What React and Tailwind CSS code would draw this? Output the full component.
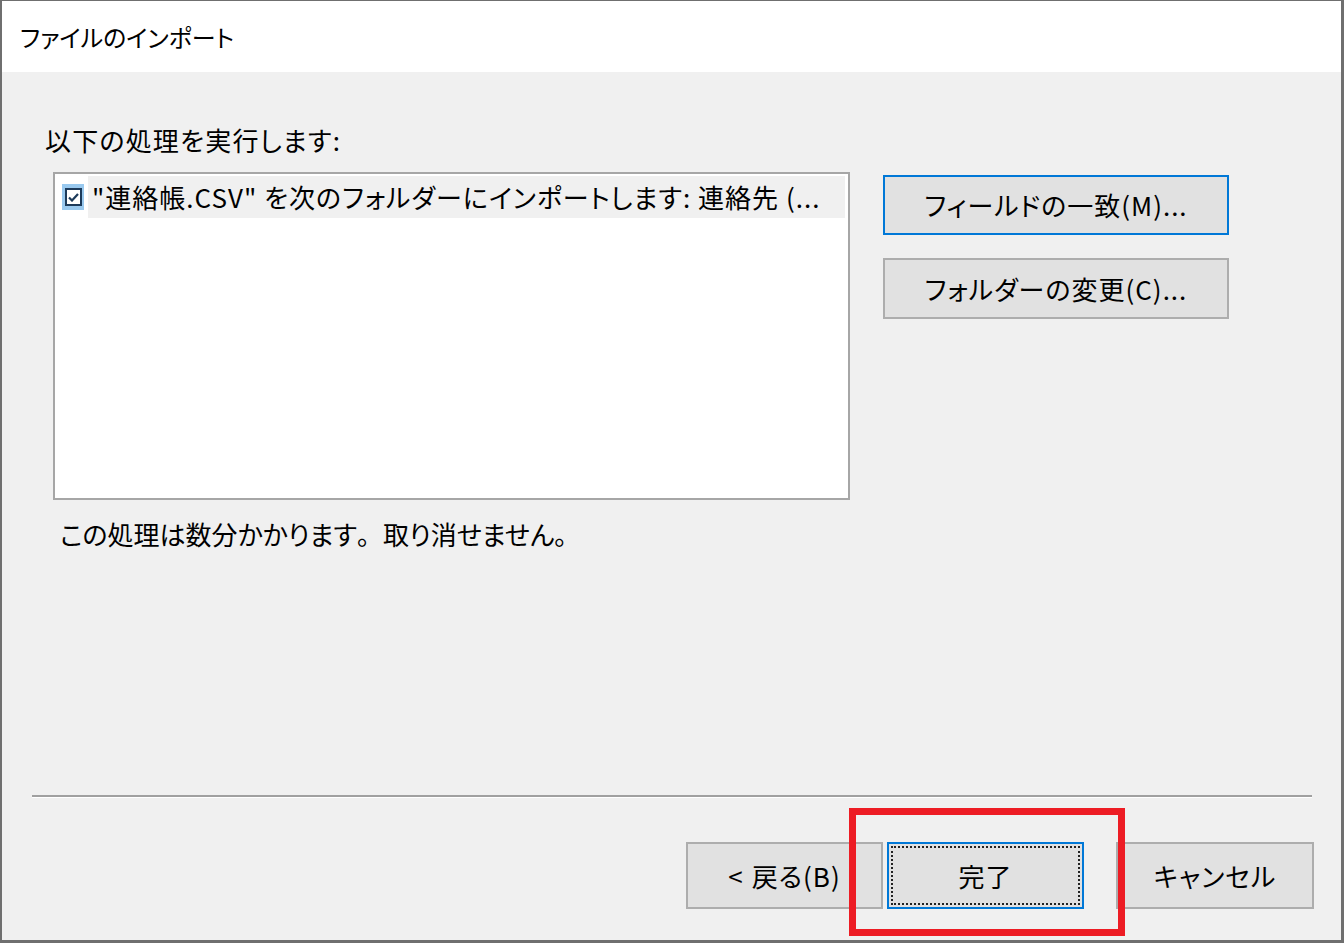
import React from 'react';

const jp = "font-['Noto_Sans_CJK_JP',sans-serif] [font-feature-settings:'palt'] text-black";

const WinButton = ({ children, focused = false, dotted = false, className = '' }) => (
  <div
    className={`relative flex items-center justify-center bg-[#e1e1e1] ${
      focused ? 'border-2 border-[#0078d7]' : 'border-2 border-[#adadad]'
    } ${className}`}
  >
    {dotted && <div className="absolute inset-[2px] border-2 border-dotted border-[#222]" />}
    <span className="text-[26px] leading-none tracking-[1px]">{children}</span>
  </div>
);

const CheckBox = () => (
  <div className="flex h-[26px] w-[22px] items-center justify-center bg-[#99c9ef]">
    <div className="flex h-[18px] w-[17px] items-center justify-center border-2 border-[#1c3a5a] bg-white">
      <svg width="11" height="9" viewBox="0 0 11 9" fill="none">
        <path d="M1 4.5 L4 7.5 L10 1" stroke="#1c3a5a" strokeWidth="2.2" />
      </svg>
    </div>
  </div>
);

// full-width punctuation keeps its normal width
const Kuten = () => <span className="[font-feature-settings:normal]">。</span>;

export default function App() {
  return (
    <div className={`relative flex h-[943px] w-[1344px] flex-col border-t border-l-2 border-r-[3px] border-b-[3px] border-[#6f6f6f] bg-[#f0f0f0] ${jp}`}>
      {/* title */}
      <div className="flex h-[71px] items-center bg-white pl-[18px]">
        <span className="text-[24px] leading-none">ファイルのインポート</span>
      </div>

      {/* body */}
      <div className="ml-[43px] mt-[52px] text-[26px] leading-[32px] tracking-[1.2px]">以下の処理を実行します:</div>

      <div className="mt-[16px] flex">
        <div className="ml-[51px] h-[328px] w-[797px] border-2 border-[#a6a6a6] bg-white">
          <div className="ml-[7px] mt-[2px] flex h-[42px] items-center">
            <CheckBox />
            <div className="ml-[4px] flex h-full w-[757px] items-center bg-[#f0f0f0] pl-[4px]">
              <span className="whitespace-nowrap text-[26px] leading-none tracking-[1px]">"連絡帳.CSV" を次のフォルダーにインポートします: 連絡先 (...</span>
            </div>
          </div>
        </div>

        <div className="ml-[33px] flex flex-col">
          <WinButton focused className="mt-[3px] h-[60px] w-[346px]">フィールドの一致(M)...</WinButton>
          <WinButton className="mt-[23px] h-[61px] w-[346px]">フォルダーの変更(C)...</WinButton>
        </div>
      </div>

      <div className="ml-[58px] mt-[18px] text-[26px] leading-[32px]">
        この処理は数分かかります<Kuten />取り消せません<Kuten />
      </div>

      <div className="flex-1" />

      {/* separator */}
      <div className="ml-[30px] w-[1280px] border-t-2 border-b border-t-[#a0a0a0] border-b-white" />

      {/* footer buttons */}
      <div className="mt-[44px] mb-[31px] flex justify-end pr-[27px]">
        <WinButton className="h-[67px] w-[197px]">
          <span className="mr-[8px]">&lt;</span>戻る(B)
        </WinButton>
        <WinButton focused dotted className="ml-[4px] h-[67px] w-[197px]">完了</WinButton>
        <WinButton className="ml-[32px] h-[67px] w-[198px]">キャンセル</WinButton>
      </div>

      {/* red highlight annotation */}
      <div className="absolute left-[847px] top-[807px] h-[128px] w-[276px] border-[7px] border-[#ed1c24]" />
    </div>
  );
}
